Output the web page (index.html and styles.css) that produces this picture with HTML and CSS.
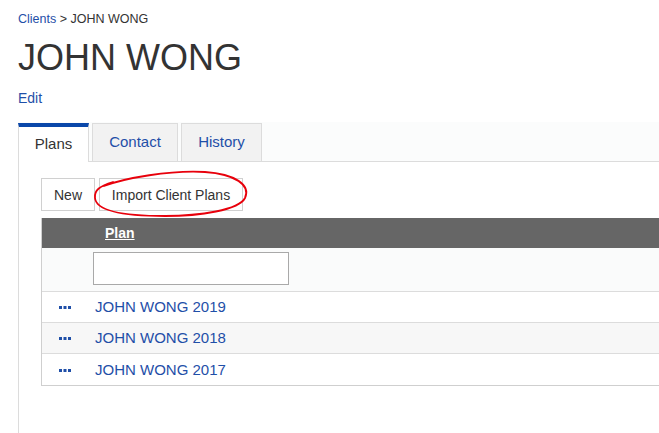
FILE: index.html
```html
<!DOCTYPE html>
<html>
<head>
<meta charset="utf-8">
<link rel="stylesheet" href="styles.css">
</head>
<body>
<div class="page">
  <div class="crumbs"><a href="#">Clients</a> &gt; JOHN WONG</div>
  <h1 class="title">JOHN WONG</h1>
  <a class="edit" href="#">Edit</a>
  <div class="tabs">
    <div class="tab active">Plans</div>
    <div class="tab tab-contact">Contact</div>
    <div class="tab tab-history">History</div>
  </div>
  <div class="panel">
    <div class="toolbar">
      <button class="btn btn-new">New</button>
      <button class="btn btn-import">Import Client Plans</button>
    </div>
    <div class="grid">
      <div class="row head">
        <div class="c1"></div>
        <div class="c2"><a href="#">Plan</a></div>
      </div>
      <div class="row filter">
        <div class="c1"></div>
        <div class="c2"><input class="filter-input" type="text"></div>
      </div>
      <div class="row data">
        <div class="c1"><svg class="dots" width="12" height="3" viewBox="0 0 12 3"><rect x="0" y="0" width="3" height="3"/><rect x="4.5" y="0" width="3" height="3"/><rect x="9" y="0" width="3" height="3"/></svg></div>
        <div class="c2"><a href="#">JOHN WONG 2019</a></div>
      </div>
      <div class="row data alt">
        <div class="c1"><svg class="dots" width="12" height="3" viewBox="0 0 12 3"><rect x="0" y="0" width="3" height="3"/><rect x="4.5" y="0" width="3" height="3"/><rect x="9" y="0" width="3" height="3"/></svg></div>
        <div class="c2"><a href="#">JOHN WONG 2018</a></div>
      </div>
      <div class="row data last">
        <div class="c1"><svg class="dots" width="12" height="3" viewBox="0 0 12 3"><rect x="0" y="0" width="3" height="3"/><rect x="4.5" y="0" width="3" height="3"/><rect x="9" y="0" width="3" height="3"/></svg></div>
        <div class="c2"><a href="#">JOHN WONG 2017</a></div>
      </div>
    </div>
  </div>
</div>
<svg class="annot" width="659" height="433" viewBox="0 0 659 433">
  <path d="M104 186 C125 178 170 170 205 172 C235 174 251 185 245 198 C239 210 200 216 165 216 C120 216 96 210 95 198 C94 190 100 186 113 182" fill="none" stroke="#e8000b" stroke-width="1.8" stroke-linecap="round"/>
</svg>
</body>
</html>
```
FILE: styles.css
```css
html, body {
  margin: 0;
  padding: 0;
  overflow: hidden;
  background: #fff;
}
body {
  font-family: "Liberation Sans", Arial, sans-serif;
  color: #333;
  width: 659px;
  height: 433px;
  position: relative;
}
a {
  color: #1f4fa8;
  text-decoration: none;
}
.page {
  padding: 11px 0 0 18px;
  height: 422px;
  display: flex;
  flex-direction: column;
}
.crumbs {
  font-size: 12.5px;
  line-height: 16px;
  color: #333;
}
.title {
  font-size: 36px;
  font-weight: normal;
  line-height: 42px;
  margin: 10px 0 0 0;
  color: #333;
}
.edit {
  font-size: 14px;
  line-height: 18px;
  margin-top: 10px;
  align-self: flex-start;
}
.tabs {
  margin-top: 15px;
  display: flex;
  gap: 3px;
  background: #fbfcfc;
  border-bottom: 1px solid #dcdcdc;
  padding-top: 1px;
  height: 38px;
}
.tab {
  box-sizing: border-box;
  height: 38px;
  font-size: 15px;
  line-height: 36px;
  text-align: center;
  color: #1f4fa8;
  background: #f2f2f2;
  border: 1px solid #dcdcdc;
  border-bottom: none;
}
.tab.active {
  width: 71px;
  color: #333;
  background: #fff;
  border-top: 4px solid #0a47a9;
  border-left: 1px solid #dcdcdc;
  line-height: 33px;
  height: 39px;
  margin-bottom: -1px;
}
.tab-contact { width: 86px; }
.tab-history { width: 81px; }
.panel {
  flex: 1;
  border-left: 1px solid #dcdcdc;
  padding: 16px 0 0 22px;
  overflow: hidden;
}
.toolbar {
  display: flex;
  gap: 4px;
}
.btn {
  box-sizing: border-box;
  height: 33px;
  background: #fff;
  border: 1px solid #d0d0d0;
  border-radius: 0;
  font-family: "Liberation Sans", Arial, sans-serif;
  font-size: 14px;
  color: #333;
  padding: 0;
}
.btn-new { width: 54px; }
.btn-import { width: 144px; }
.grid {
  margin-top: 7px;
  width: 700px;
  border-left: 1px solid #cfcfcf;
}
.row {
  display: flex;
  align-items: center;
}
.c1 {
  width: 51px;
  flex: none;
  display: flex;
  padding-left: 17px;
  box-sizing: border-box;
}
.c2 {
  flex: 1;
}
.head {
  height: 30px;
  background: #666;
}
.head a {
  color: #fff;
  font-weight: bold;
  font-size: 14px;
  text-decoration: underline;
  margin-left: 12px;
}
.filter {
  height: 44px;
  background: #fafbfb;
  border-bottom: 1px solid #dcdcdc;
  box-sizing: border-box;
  align-items: flex-start;
}
.filter-input {
  box-sizing: border-box;
  width: 196px;
  height: 33px;
  border: 1px solid #a9a9a9;
  background: #fff;
  margin: 4px 0 0 0;
  padding: 0;
  display: block;
}
.data {
  height: 31px;
  border-bottom: 1px solid #dcdcdc;
  box-sizing: border-box;
}
.data.last {
  border-bottom: 1px solid #cfcfcf;
  height: 32px;
}
.data.alt {
  background: #f7f7f7;
}
.data a {
  font-size: 15px;
  margin-left: 2px;
}
.dots {
  display: block;
  fill: #1f4fa8;
  margin-top: 1px;
}
.annot {
  position: absolute;
  left: 0;
  top: 0;
  pointer-events: none;
}
```
